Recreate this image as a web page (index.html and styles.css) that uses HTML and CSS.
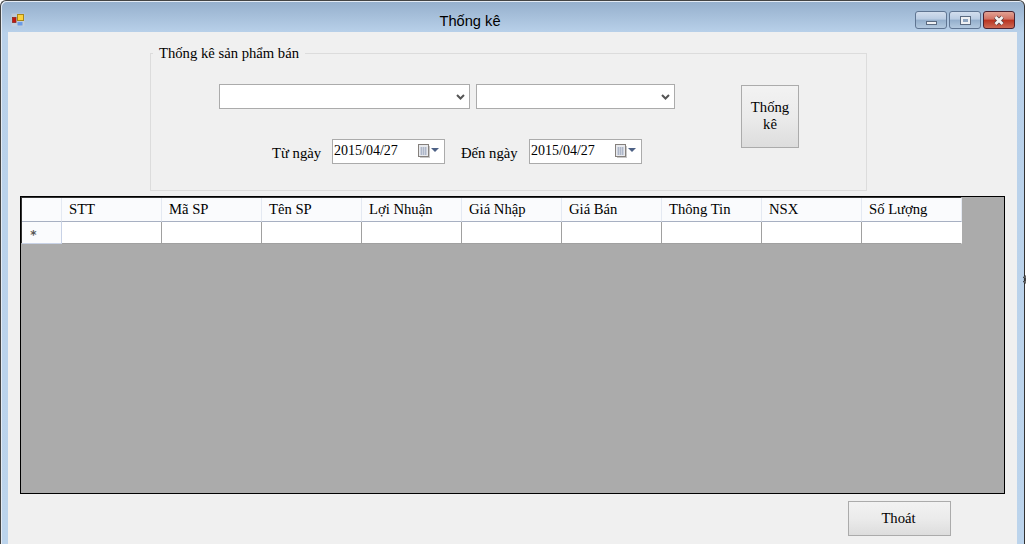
FILE: index.html
```html
<!DOCTYPE html>
<html lang="vi">
<head>
    <meta charset="UTF-8">
    <title>Thống kê</title>
    <link rel="stylesheet" href="styles.css">
</head>
<body>
    <div class="window">
        <div class="titlebar">
            <svg class="app-icon" width="14" height="14" viewBox="0 0 14 14">
                <rect x="0.5" y="0.5" width="13" height="13" fill="#d4d6d8" opacity="0.5"/>
                <rect x="1.5" y="4.5" width="3.5" height="5" fill="#c4160f" stroke="#8c2a20" stroke-width="0.8"/>
                <rect x="6.5" y="1.5" width="6" height="6" fill="#fbd23e" stroke="#a98718"/>
                <rect x="6.5" y="9" width="5" height="3.5" fill="#6b9be6"/>
            </svg>
            <div class="title">Thống kê</div>
            <div class="win-buttons">
                <div class="win-btn"><span class="glyph-min"></span></div>
                <div class="win-btn"><span class="glyph-max"></span></div>
                <div class="win-btn close">
                    <svg width="14" height="11" viewBox="0 0 14 11">
                        <path d="M3.5 2l7 7M10.5 2l-7 7" fill="none" stroke="#5b3f3f" stroke-width="4.4"/>
                        <path d="M3.5 2l7 7M10.5 2l-7 7" fill="none" stroke="#f4f4f4" stroke-width="2.8"/>
                    </svg>
                </div>
            </div>
        </div>
        <div class="client">
            <fieldset class="stats-group">
                <legend>Thống kê sản phẩm bán</legend>
                <div class="filters">
                    <div class="combo-row">
                        <div class="combo combo-wide">
                            <svg width="9" height="6" viewBox="0 0 9 6"><path d="M1 1l3.5 3.5L8 1" fill="none" stroke="#555" stroke-width="2"/></svg>
                        </div>
                        <div class="combo combo-narrow">
                            <svg width="9" height="6" viewBox="0 0 9 6"><path d="M1 1l3.5 3.5L8 1" fill="none" stroke="#555" stroke-width="2"/></svg>
                        </div>
                    </div>
                    <div class="date-row">
                        <span class="date-label">Từ ngày</span>
                        <div class="date-box">
                            <span>2015/04/27</span>
                            <svg class="cal" width="22" height="14" viewBox="0 0 22 14">
                                <rect x="2" y="2" width="10" height="12" fill="#c8c8c8"/>
                                <rect x="0.5" y="0.5" width="10" height="12" fill="#e8eaee" stroke="#85807c"/>
                                <path d="M2 4h7M2 6h7M2 8h7M2 10h7M3.5 3v8M5.5 3v8M7.5 3v8" stroke="#a6b0c4" stroke-width="0.8"/>
                                <path d="M13 4h8l-4 4z" fill="#4d6185"/>
                            </svg>
                        </div>
                        <span class="date-label date-label-to">Đến ngày</span>
                        <div class="date-box">
                            <span>2015/04/27</span>
                            <svg class="cal" width="22" height="14" viewBox="0 0 22 14">
                                <rect x="2" y="2" width="10" height="12" fill="#c8c8c8"/>
                                <rect x="0.5" y="0.5" width="10" height="12" fill="#e8eaee" stroke="#85807c"/>
                                <path d="M2 4h7M2 6h7M2 8h7M2 10h7M3.5 3v8M5.5 3v8M7.5 3v8" stroke="#a6b0c4" stroke-width="0.8"/>
                                <path d="M13 4h8l-4 4z" fill="#4d6185"/>
                            </svg>
                        </div>
                    </div>
                </div>
                <button class="btn btn-stats">Thống kê</button>
            </fieldset>

            <div class="grid-area">
                <table class="grid">
                    <thead>
                        <tr>
                            <th class="row-head"></th>
                            <th>STT</th>
                            <th>Mã SP</th>
                            <th>Tên SP</th>
                            <th>Lợi Nhuận</th>
                            <th>Giá Nhập</th>
                            <th>Giá Bán</th>
                            <th>Thông Tin</th>
                            <th>NSX</th>
                            <th>Số Lượng</th>
                        </tr>
                    </thead>
                    <tbody>
                        <tr>
                            <td class="row-head"><span class="star">*</span></td>
                            <td></td><td></td><td></td><td></td><td></td><td></td><td></td><td></td><td></td>
                        </tr>
                    </tbody>
                </table>
            </div>

            <div class="footer">
                <button class="btn btn-exit">Thoát</button>
            </div>
        </div>
        <svg class="resize-cursor" width="4" height="9" viewBox="0 0 4 9"><path d="M2 0.5L3.5 2.5H2.6V6.5H3.5L2 8.5.5 6.5H1.4V2.5H.5z" fill="#fff" stroke="#000" stroke-width="0.8"/></svg>
    </div>
</body>
</html>
```

FILE: styles.css
```css
html, body {
    margin: 0;
    padding: 0;
    height: 100%;
}
body {
    font-family: "Liberation Serif", "Times New Roman", serif;
    font-size: 14.67px;
    color: #000;
    background-color: #fff;
    overflow: hidden;
}
.window {
    position: relative;
    display: flex;
    flex-direction: column;
    width: 1025px;
    height: 544px;
    box-sizing: border-box;
    border-radius: 6px 6px 0 0;
    border-top: 1px solid #444;
    border-left: 1px solid #444;
    border-right: 1px solid #333;
    background: linear-gradient(to bottom, #95afcc 0, #b9d1ea 32px, #bcd4ec 100%);
    box-shadow: inset 1px 1px 0 #e4ebf4;
}

/* title bar */
.titlebar {
    display: flex;
    height: 31px;
    flex: none;
    padding: 0 9px 0 10px;
    position: relative;
}
.app-icon {
    flex: none;
    margin-top: 12px;
}
.title {
    position: absolute;
    left: 0;
    width: 938px;
    top: 11px;
    text-align: center;
    font-family: "Liberation Sans", Arial, sans-serif;
    font-size: 14.67px;
    line-height: 18px;
}
.win-buttons {
    display: flex;
    gap: 2px;
    margin-left: auto;
    margin-top: 10px;
    height: 18px;
}
.win-btn {
    display: flex;
    align-items: center;
    justify-content: center;
    width: 32px;
    height: 18px;
    box-sizing: border-box;
    border: 1px solid #5f7592;
    border-radius: 3px;
    background: linear-gradient(to bottom, #d2deed 0, #b9cce3 45%, #93aecb 50%, #b3c9df 100%);
}
.win-btn.close {
    border-color: #4a2230;
    background: linear-gradient(to bottom, #e2a294 0, #d17162 45%, #b8321f 50%, #cd6a55 100%);
}
.glyph-min {
    display: block;
    width: 9px;
    height: 2px;
    margin-top: 5px;
    background: #eef0f3;
    border: 1px solid #5a6a80;
}
.glyph-max {
    display: block;
    width: 5px;
    height: 3px;
    background: #8ea5c0;
    border: 2px solid #eef0f3;
    outline: 1px solid #5a6a80;
}

/* client area */
.client {
    flex: 1;
    display: flex;
    flex-direction: column;
    margin: 0 7px;
    background-color: #f0f0f0;
    padding: 13px 12px 8px 12px;
    min-height: 0;
}
.stats-group {
    display: flex;
    flex: none;
    margin: 0 138px 0 130px;
    padding: 0;
    height: 146px;
    box-sizing: border-box;
    border: 1px solid #dcdcdc;
}
.stats-group legend {
    margin-left: 2px;
    padding: 0 6px;
    line-height: 16px;
    height: 16px;
}
.filters {
    width: 522px;
    margin-left: 68px;
}
.combo-row {
    display: flex;
    gap: 6px;
    margin-top: 23px;
}
.combo {
    display: flex;
    align-items: center;
    justify-content: flex-end;
    height: 25px;
    box-sizing: border-box;
    padding-right: 4px;
    background: #fff;
    border: 1px solid #ababab;
}
.combo-wide {
    width: 251px;
}
.combo-narrow {
    width: 199px;
}
.date-row {
    display: flex;
    align-items: center;
    margin-top: 30px;
    padding-left: 53px;
}
.date-label {
    width: 60px;
    flex: none;
    padding-top: 4px;
}
.date-label-to {
    width: 68px;
    margin-left: 16px;
}
.date-box {
    display: flex;
    align-items: center;
    justify-content: space-between;
    width: 113px;
    height: 25px;
    flex: none;
    box-sizing: border-box;
    padding: 0 4px 2px 1px;
    font-size: 14px;
    background: #fff;
    border: 1px solid #ababab;
}
.cal {
    flex: none;
    margin-left: 3px;
}
.btn {
    font-family: inherit;
    font-size: 14.67px;
    color: #000;
    border: 1px solid #ababab;
    background: linear-gradient(to bottom, #f2f2f2 0, #ebebeb 50%, #dddddd 100%);
    padding: 0;
}
.btn-stats {
    width: 58px;
    height: 63px;
    margin: 24px 0 0 0;
    padding: 0 6px 2px 6px;
    line-height: 17px;
}

/* data grid */
.grid-area {
    height: 298px;
    flex: none;
    margin-top: 5px;
    box-sizing: border-box;
    background-color: #ababab;
    border: 1px solid #000;
}
.grid {
    border-collapse: separate;
    border-spacing: 0;
    table-layout: fixed;
    width: 940px;
    margin: 1px 0 0 1px;
    box-shadow: -1px -1px 0 #333;
}
.grid th {
    width: 100px;
    height: 24px;
    box-sizing: border-box;
    padding: 0 0 0 7px;
    text-align: left;
    font-weight: normal;
    background: #fafbfd;
    border-right: 1px solid #e4e9f2;
    border-bottom: 1px solid #a7b0c2;
}
.grid th.row-head,
.grid td.row-head {
    width: 40px;
    padding: 0;
}
.grid td {
    height: 22px;
    padding: 0;
    box-sizing: border-box;
    background: #fff;
    border-right: 1px solid #a0a0a0;
    border-bottom: 1px solid #a0a0a0;
}
.grid td:last-child {
    border-right-color: #fff;
}
.grid td.row-head {
    background: #fafbfd;
    text-align: center;
    border-right: 1px solid #c8d2e6;
    border-bottom: 1px solid #c8d2e6;
}
.star {
    color: #555;
    font-family: "DejaVu Sans", sans-serif;
    font-weight: bold;
    font-size: 12px;
    position: relative;
    top: 2px;
    left: -8px;
}
.footer {
    display: flex;
    justify-content: flex-end;
    margin-top: 7px;
    padding-right: 54px;
}
.btn-exit {
    width: 103px;
    height: 35px;
    padding-right: 2px;
}
.resize-cursor {
    position: absolute;
    top: 274px;
    right: -3px;
}
```
